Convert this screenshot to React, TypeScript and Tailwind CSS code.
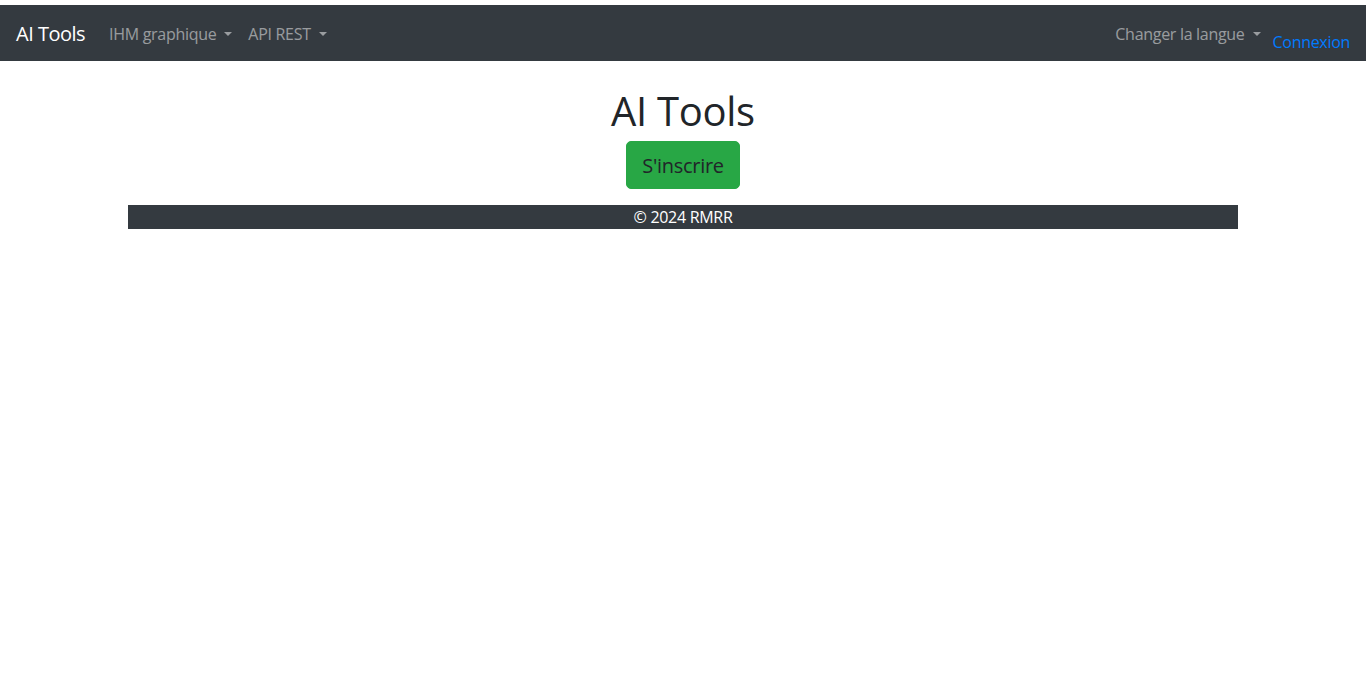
import React from "react";

const Caret = () => (
  <span className="ml-2 inline-block align-[0.255em] border-x-[0.3em] border-t-[0.3em] border-x-transparent border-t-current" />
);

export default function App() {
  return (
    <div className="min-h-screen bg-white pt-[5px] text-[#212529] tracking-[-0.3px] font-['Open_Sans',sans-serif]">
      {/* Top navigation */}
      <nav className="flex h-14 items-center bg-[#343a40] px-4 pt-[2px]">
        <a href="#" className="mr-4 text-[20px] leading-[30px] tracking-[-0.5px] text-white">
          AI Tools
        </a>
        <ul className="flex items-center text-[16px] leading-6 text-white/50">
          <li className="px-2">
            IHM graphique
            <Caret />
          </li>
          <li className="px-2">
            API REST
            <Caret />
          </li>
        </ul>
        <div className="ml-auto flex items-center text-[16px] leading-6">
          <span className="px-2 text-white/50">
            Changer la langue
            <Caret />
          </span>
          <a href="#" className="ml-1 mt-4 text-[#007bff]">
            Connexion
          </a>
        </div>
      </nav>

      {/* Main content */}
      <main className="mx-auto w-[1140px] px-[15px]">
        <div className="mt-6 flex flex-col items-center">
          <h1 className="mb-[6px] pt-[2px] text-[40px] leading-[48px] font-normal">AI Tools</h1>
          <button className="rounded-[5px] border border-[#28a745] bg-[#28a745] px-[15px] pt-[9px] pb-[7px] text-[20px] leading-[30px] text-[#212529]">
            S'inscrire
          </button>
        </div>
        <footer className="mt-4 bg-[#343a40] text-center text-[16px] leading-6 text-white">
          © 2024 RMRR
        </footer>
      </main>
    </div>
  );
}
